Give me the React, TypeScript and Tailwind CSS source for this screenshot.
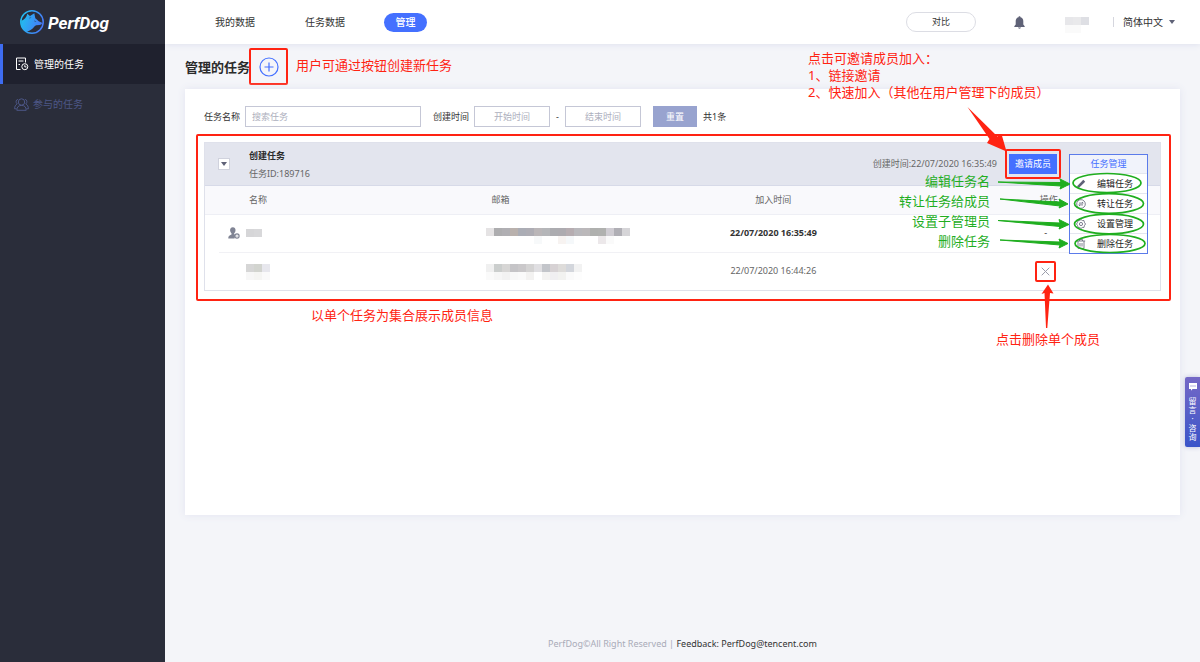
import React from 'react';

const Mosaic = ({ rows, label }: { rows: string[][]; label: string }) => (
  <div className="inline-block align-middle" role="img" aria-label={label}>
    {rows.map((row, i) => (
      <div key={i} className="flex">
        {row.map((color, j) => (
          <span key={j} className="block h-2 w-2" style={{ backgroundColor: color }} />
        ))}
      </div>
    ))}
  </div>
);

const Logo = () => (
  <svg width="24" height="24" viewBox="0 0 24 24" aria-hidden="true">
    <defs>
      <linearGradient id="dog" x1="0" y1="0.3" x2="1" y2="0.6">
        <stop offset="0" stopColor="#22bdf0" />
        <stop offset="1" stopColor="#4779f7" />
      </linearGradient>
    </defs>
    <circle cx="12" cy="12" r="11.2" fill="none" stroke="url(#dog)" strokeWidth="1.500" />
    <path
      d="M1.200 11C4.500 9.500 6.500 7.500 7.300 3.800L10 6L14.300 3.200L15.300 8.300C16.600 9.200 17.700 10.200 18.700 11.300L22 12.800C22 14.300 20.800 15 19.300 15L16.200 15.200C15.200 15.500 14.600 16.200 14 17C12.500 19.200 10 20.800 6.300 21.800C3 19.800 1 16 1.200 11Z"
      fill="url(#dog)"
    />
    <path d="M9.800 6.500L9.200 9.300L11.500 7.500Z" fill="#2a2d3a" opacity="0.35" />
    <path d="M14.300 10.500L16.500 11.600L14.700 11.600Z" fill="#2a2d3a" />
  </svg>
);

const ManagedIcon = () => (
  <svg width="14" height="14" viewBox="0 0 14 14" fill="none" stroke="currentColor" strokeWidth="1" aria-hidden="true">
    <path d="M5.500 12.500H1.500V1H10.500V5.500M3.500 4H8.500M3.500 7.500H5" />
    <circle cx="9.800" cy="9.700" r="3" />
    <path d="M9.800 8.200V9.900H11.500" />
  </svg>
);

const JoinedIcon = () => (
  <svg width="15" height="13" viewBox="0 0 15 13" fill="none" stroke="currentColor" strokeWidth="1" aria-hidden="true">
    <circle cx="7.500" cy="4" r="3.200" />
    <path d="M2.800 12.300C2.800 9 4.500 7.400 7.500 7.400S12.200 9 12.200 12.300ZM3.800 1.300C1.800 1.700 1.500 4.700 3.200 5.900C1.400 6.900 0.600 8.500 0.600 10.800H2.500M11.200 1.300C13.200 1.700 13.500 4.700 11.800 5.900C13.600 6.900 14.400 8.500 14.400 10.800H12.500" />
  </svg>
);

const Bell = () => (
  <svg width="11" height="13" viewBox="0 0 11 13" fill="#5f6277" aria-hidden="true">
    <path d="M5.500 0.300C6.100 0.300 6.500 0.700 6.500 1.300C8.500 1.800 9.300 3.200 9.300 5.200V8.500L10.700 10.300V11H0.300V10.300L1.700 8.500V5.200C1.700 3.200 2.500 1.800 4.500 1.300C4.500 0.700 4.900 0.300 5.500 0.300ZM4 11.600H7C6.800 13 4.200 13 4 11.600Z" />
  </svg>
);

const Caret = () => (
  <svg width="6" height="4" viewBox="0 0 6 4" fill="#5f6277" aria-hidden="true">
    <path d="M0 0H6L3 4Z" />
  </svg>
);

const OwnerIcon = () => (
  <svg width="12" height="12" viewBox="0 0 12 12" aria-hidden="true">
    <path d="M4.800 0.200C6.800 0.200 7.700 1.700 7.500 3.600C7.400 4.900 6.800 5.800 6.200 6.300V7.300L7.500 8L6.500 11.500H0.300C0.200 9.300 1.200 8.500 3.500 7.500V6.300C2.800 5.700 2.200 4.800 2.100 3.600C2 1.700 2.900 0.200 4.800 0.200Z" fill="#808494" />
    <circle cx="9" cy="9" r="2.100" fill="#fff" stroke="#808494" strokeWidth="1.200" />
    <circle cx="9" cy="9" r="0.600" fill="#808494" />
  </svg>
);

const menuIcons: Record<string, React.ReactNode> = {
  edit: <path d="M0.800 9.200L1.500 6.800L7.300 0.800L9.200 2.700L3.300 8.500Z" fill="currentColor" stroke="none" />,
  transfer: (
    <>
      <circle cx="5" cy="5" r="4.300" />
      <path d="M3 4.100H7.200L6 3M7 5.900H2.800L4 7" />
    </>
  ),
  settings: (
    <>
      <path d="M5 0.500L6.300 1.500L8 1.600L8.400 3.300L9.500 5L8.400 6.700L8 8.400L6.300 8.500L5 9.500L3.700 8.500L2 8.400L1.600 6.700L0.500 5L1.600 3.300L2 1.600L3.700 1.500Z" />
      <circle cx="5" cy="5" r="1.600" />
    </>
  ),
  remove: <path d="M0.800 2H9.200M3.500 2V0.600H6.500V2M2 2V9.400H8V2M4 4V7.500M6 4V7.500" />,
};

const menuItems = [
  { icon: 'edit', label: '编辑任务' },
  { icon: 'transfer', label: '转让任务' },
  { icon: 'settings', label: '设置管理' },
  { icon: 'remove', label: '删除任务' },
];

const Callouts = () => (
  <svg
    className="pointer-events-none absolute top-0 right-0 z-20"
    width="380"
    height="250"
    viewBox="800 89 380 250"
    aria-hidden="true"
  >
    <g fill="#ff2312">
      <path d="M967.500 107L989.500 139L987 143L1006.500 151.500L1001.500 134L997.500 136.500Z" />
      <path d="M1046 328L1044.500 293L1041.500 294L1048 284.500L1053.500 293.500L1050 293L1047.300 328Z" />
    </g>
    <g fill="#1fae1f">
      <path d="M998 182L1061 186L1060 189L1070 184L1060 179L1061 182.500Z" stroke="#1fae1f" />
      <path d="M1000 199L1060 206L1059 208L1068 204L1059 199L1060 202Z" stroke="#1fae1f" />
      <path d="M998 220.500L1060 226.500L1059 229L1069 224.500L1059 219.500L1060 223Z" stroke="#1fae1f" />
      <path d="M1000 240L1060 245L1059 248L1068 243.500L1059 239L1060 242Z" stroke="#1fae1f" />
    </g>
    <g fill="none" stroke="#1fae1f" strokeWidth="1.700">
      <ellipse cx="1107" cy="183" rx="34" ry="9.500" />
      <ellipse cx="1109" cy="203.500" rx="34.500" ry="9.800" />
      <ellipse cx="1109" cy="224" rx="34.500" ry="9.800" />
      <ellipse cx="1110" cy="243.500" rx="35" ry="9" />
    </g>
  </svg>
);

const W = '#ffffff';
const mail1 = [
  ['#e5e3e4', '#adadaf', '#b0afb3', '#b9b1ad', '#abadb5', '#aeadb4', '#bab6b8', '#b5b6b9', '#acacb0', '#adabb0', '#b6adb1', '#b9b8bc', '#bbb8ba', '#afb0ae', '#b0b1af', '#cfccd2', '#b0afb5', '#d6d5d8'],
  [W, W, W, W, W, W, '#f7f9fa', W, W, '#f7f3f1', '#f5f8fa', W, W, W, '#ece8ea', '#fafafa', W, W],
];
const mail2 = [
  ['#f0f0f0', '#cbcecd', '#d7d6d5', '#c5c4c7', '#cac8ca', '#d4d3d3', '#e0dfe2', '#c3c5ca', '#d7d2d4', '#dedcda', '#d3d6dc', '#f2f2f2'],
  ['#fafafa', '#f6f6f6', '#f2f2f2', '#f8f8f8', '#fafafa', '#f3f2f1', W, '#f4f3f2', '#f0eff1', '#f2f2f0', '#fafafa', '#fdfdfd'],
];

const field = 'h-[21px] border border-[#c5c7d6] bg-white text-[9px] text-[#333] outline-none placeholder:text-[#adafbd]';

export default function App() {
  return (
    <div className="relative flex min-h-screen bg-[#f4f5f9] font-['Noto_Sans','Noto_Sans_CJK_SC',sans-serif] text-[9px] leading-4 text-[#333]">
      <aside className="z-10 w-[165px] shrink-0 bg-[#2a2d3a]">
        <a href="#home" className="flex h-11 items-center gap-1 pl-5">
          <Logo />
          <span className="pt-[2px] font-[Roboto,sans-serif] text-[17px] font-bold text-white italic">PerfDog</span>
        </a>
        <nav className="text-[10px]">
          <a href="#managed" className="flex h-10 items-center gap-[5px] border-l-[3px] border-[#3e6cf0] bg-[#1f212e] pl-3 text-white">
            <ManagedIcon />
            管理的任务
          </a>
          <a href="#joined" className="flex h-10 items-center gap-1 border-l-[3px] border-transparent pl-[11px] text-[#4d5787]">
            <JoinedIcon />
            参与的任务
          </a>
        </nav>
      </aside>

      <div className="flex min-w-0 flex-1 flex-col">
        <header className="flex h-11 shrink-0 items-center bg-white pr-[25px] pl-[50px] text-[10px] shadow-[0_1px_6px_#dfe1ee]">
          <nav className="flex items-center">
            <a href="#mine" className="mr-[50px]">我的数据</a>
            <a href="#tasks" className="mr-[39px]">任务数据</a>
            <a href="#manage" className="flex h-[19px] w-[43px] items-center justify-center rounded-full bg-[#4470ff] font-medium text-white">管理</a>
          </nav>
          <div className="ml-auto flex items-center">
            <button type="button" className="h-5 w-[70px] rounded-full border border-[#dcdde4] bg-white text-[9px]">对比</button>
            <button type="button" aria-label="通知" className="ml-[38px]"><Bell /></button>
            <div className="ml-10 w-[48px] pt-1">
              <Mosaic label="用户" rows={[['#e7e7ea', '#e9e9eb', '#dedfe4'], ['#fafafa', '#fafafa', W]]} />
            </div>
            <span className="mr-[9px] h-[10px] w-px bg-[#d5d6de]" />
            <label className="flex items-center">
              <select aria-label="语言" className="w-[46px] appearance-none bg-transparent outline-none">
                <option>简体中文</option>
              </select>
              <Caret />
            </label>
          </div>
        </header>

        <main className="px-5">
          <div className="flex h-[45px] items-center">
            <h1 className="w-[64px] text-[13px] font-bold whitespace-nowrap text-[#2b2b2b]">管理的任务</h1>
            <button type="button" aria-label="创建任务" className="flex h-[37px] w-[39px] items-center justify-center rounded-xs border-2 border-[#ff2312]">
              <svg width="20" height="20" viewBox="0 0 20 20" fill="none" stroke="#4470ff" strokeWidth="1.200" aria-hidden="true">
                <circle cx="10" cy="10" r="9" />
                <path d="M10 5.500V14.500M5.500 10H14.500" />
              </svg>
            </button>
            <span className="ml-2 pb-1 text-[13px] text-[#ff2312]">用户可通过按钮创建新任务</span>
          </div>

          <section className="relative min-h-[426px] bg-white px-[19px] pt-[17px] shadow-[0_0_8px_#e2e4f0]">
            <form className="flex items-center" onSubmit={(e) => e.preventDefault()}>
              <label htmlFor="task" className="mr-[5px]">任务名称</label>
              <input id="task" placeholder="搜索任务" className={`${field} mr-3 w-[176px] px-[6px]`} />
              <label htmlFor="start" className="mr-[5px]">创建时间</label>
              <input id="start" placeholder="开始时间" className={`${field} w-[76px] text-center`} />
              <span className="w-[15px] text-center">-</span>
              <input id="end" aria-label="结束时间" placeholder="结束时间" className={`${field} mr-3 w-[76px] text-center`} />
              <button type="reset" className="mr-[6px] h-[21px] w-[44px] bg-[#98a3cf] text-white">重置</button>
              <span>共1条</span>
            </form>

            <div className="relative mt-[15px] border border-[#dfe1eb] text-[#666]">
              <div className="relative flex h-[43px] items-center border-b border-[#d7dae8] bg-[#e3e5ee] pl-[13px]">
                <button type="button" aria-label="收起" className="mr-[19px] flex h-3 w-3 items-center justify-center border border-[#d0d2dd] bg-white">
                  <Caret />
                </button>
                <div className="pt-px leading-[18px]">
                  <h2 className="font-bold text-[#2b2b2b]">创建任务</h2>
                  <p>任务ID:189716</p>
                </div>
                <span className="mr-2 ml-auto">创建时间:22/07/2020 16:35:49</span>
                <span className="mr-[99px] rounded-xs border-2 border-[#ff2312] p-[2px] py-[3px]">
                  <button type="button" className="block h-5 w-[48px] bg-[#4470ff] text-white">邀请成员</button>
                </span>
                <div className="absolute top-[11px] right-3 z-10 w-[79px] border border-[#5b7bea] bg-white text-[#222]">
                  <button type="button" className="block h-[18px] w-full bg-[#f1f3fb] text-[#4470ff]">任务管理</button>
                  {menuItems.map((item) => (
                    <button key={item.icon} type="button" className="flex h-5 w-full items-center border-t border-[#e4e6ef] pl-[6px]">
                      <svg width="10" height="10" viewBox="0 0 10 10" fill="none" stroke="currentColor" strokeWidth="0.800" className="mr-[11px] text-[#5f6277]" aria-hidden="true">
                        {menuIcons[item.icon]}
                      </svg>
                      {item.label}
                    </button>
                  ))}
                </div>
              </div>

              <table className="w-full table-fixed text-left">
                <thead>
                  <tr className="h-7 border-b border-[#eeeff5] bg-[#f9f9fc]">
                    <td className="w-[14px]" />
                    <th className="w-[28%] pl-[30px] font-normal">名称</th>
                    <th className="w-[15.8%] pl-[5px] font-normal">邮箱</th>
                    <th className="w-[28.5%] text-center font-normal">加入时间</th>
                    <th className="pl-[42px] text-center font-normal">操作</th>
                    <td className="w-[14px]" />
                  </tr>
                </thead>
                <tbody>
                  <tr className="h-[38px]">
                    <td />
                    <td className="border-b border-[#f1f1f5] pl-[9px]">
                      <div className="flex items-center gap-[6px]">
                        <OwnerIcon />
                        <Mosaic label="成员" rows={[['#d6d6d8', '#d8d8da']]} />
                      </div>
                    </td>
                    <td className="border-b border-[#f1f1f5] pt-[6px]"><Mosaic label="邮箱" rows={mail1} /></td>
                    <td className="border-b border-[#f1f1f5] text-center font-bold text-[#333]">22/07/2020 16:35:49</td>
                    <td className="border-b border-[#f1f1f5] pl-9 text-center text-[#333]">-</td>
                    <td />
                  </tr>
                  <tr className="h-[38px]">
                    <td />
                    <td className="pl-[27px]"><Mosaic label="成员" rows={[['#d6d6d6', '#d2d4cf', '#e7e7ed'], ['#f7f7f7', '#f5f5f3', '#fafafa']]} /></td>
                    <td><Mosaic label="邮箱" rows={mail2} /></td>
                    <td className="text-center">22/07/2020 16:44:26</td>
                    <td className="pl-9">
                      <button type="button" aria-label="删除成员" className="mx-auto flex h-[21px] w-[21px] items-center justify-center rounded-xs border-2 border-[#ff2312]">
                        <svg width="9" height="9" viewBox="0 0 9 9" fill="none" stroke="#9b9dab" strokeWidth="1" aria-hidden="true">
                          <path d="M0.700 0.700L8.300 8.300M8.300 0.700L0.700 8.300" />
                        </svg>
                      </button>
                    </td>
                    <td />
                  </tr>
                </tbody>
              </table>
              <div className="pointer-events-none absolute -top-[9px] -right-[11px] -bottom-[11px] -left-[9px] rounded-xs border-2 border-[#ff2312]" />
            </div>

            <p className="mt-4 ml-[107px] text-[13px] text-[#ff2312]">以单个任务为集合展示成员信息</p>

            <div className="absolute -top-[39px] right-0 z-20 w-[372px] text-[13px] leading-[17px] text-[#ff2312]">
              <p>点击可邀请成员加入：</p>
              <p>1、链接邀请</p>
              <p>2、快速加入（其他在用户管理下的成员）</p>
            </div>
            <div className="absolute top-[82px] right-[190px] z-20 text-right text-[13px] leading-5 text-[#1fae1f]">
              <p>编辑任务名</p>
              <p>转让任务给成员</p>
              <p>设置子管理员</p>
              <p>删除任务</p>
            </div>
            <p className="absolute top-[242px] right-20 z-20 text-[13px] text-[#ff2312]">点击删除单个成员</p>
            <Callouts />
          </section>
        </main>

        <footer className="mt-auto pb-[10px] text-center text-[#a9abb8]">
          PerfDog©All Right Reserved | <a href="mailto:PerfDog@tencent.com" className="text-[#333]">Feedback: PerfDog@tencent.com</a>
        </footer>
      </div>

      <button type="button" className="absolute top-[377px] right-0 flex h-[70px] w-[15px] flex-col items-center gap-[5px] rounded-l-xs bg-linear-to-b from-[#7468c6] to-[#3954c9] pt-[6px] text-[8px] text-white shadow-[0_0_5px_#b9bddb]">
        <svg width="8" height="8" viewBox="0 0 8 8" aria-hidden="true">
          <path d="M0 0H8V6H3.500L2 7.700V6H0Z" fill="#fff" />
          <path d="M1.500 3H2.500M3.500 3H4.500M5.500 3H6.500" stroke="#6b63c4" />
        </svg>
        <span className="flex flex-col items-center leading-[9px]">
          <span>留</span>
          <span>言</span>
          <span>·</span>
          <span>咨</span>
          <span>询</span>
        </span>
      </button>
    </div>
  );
}
